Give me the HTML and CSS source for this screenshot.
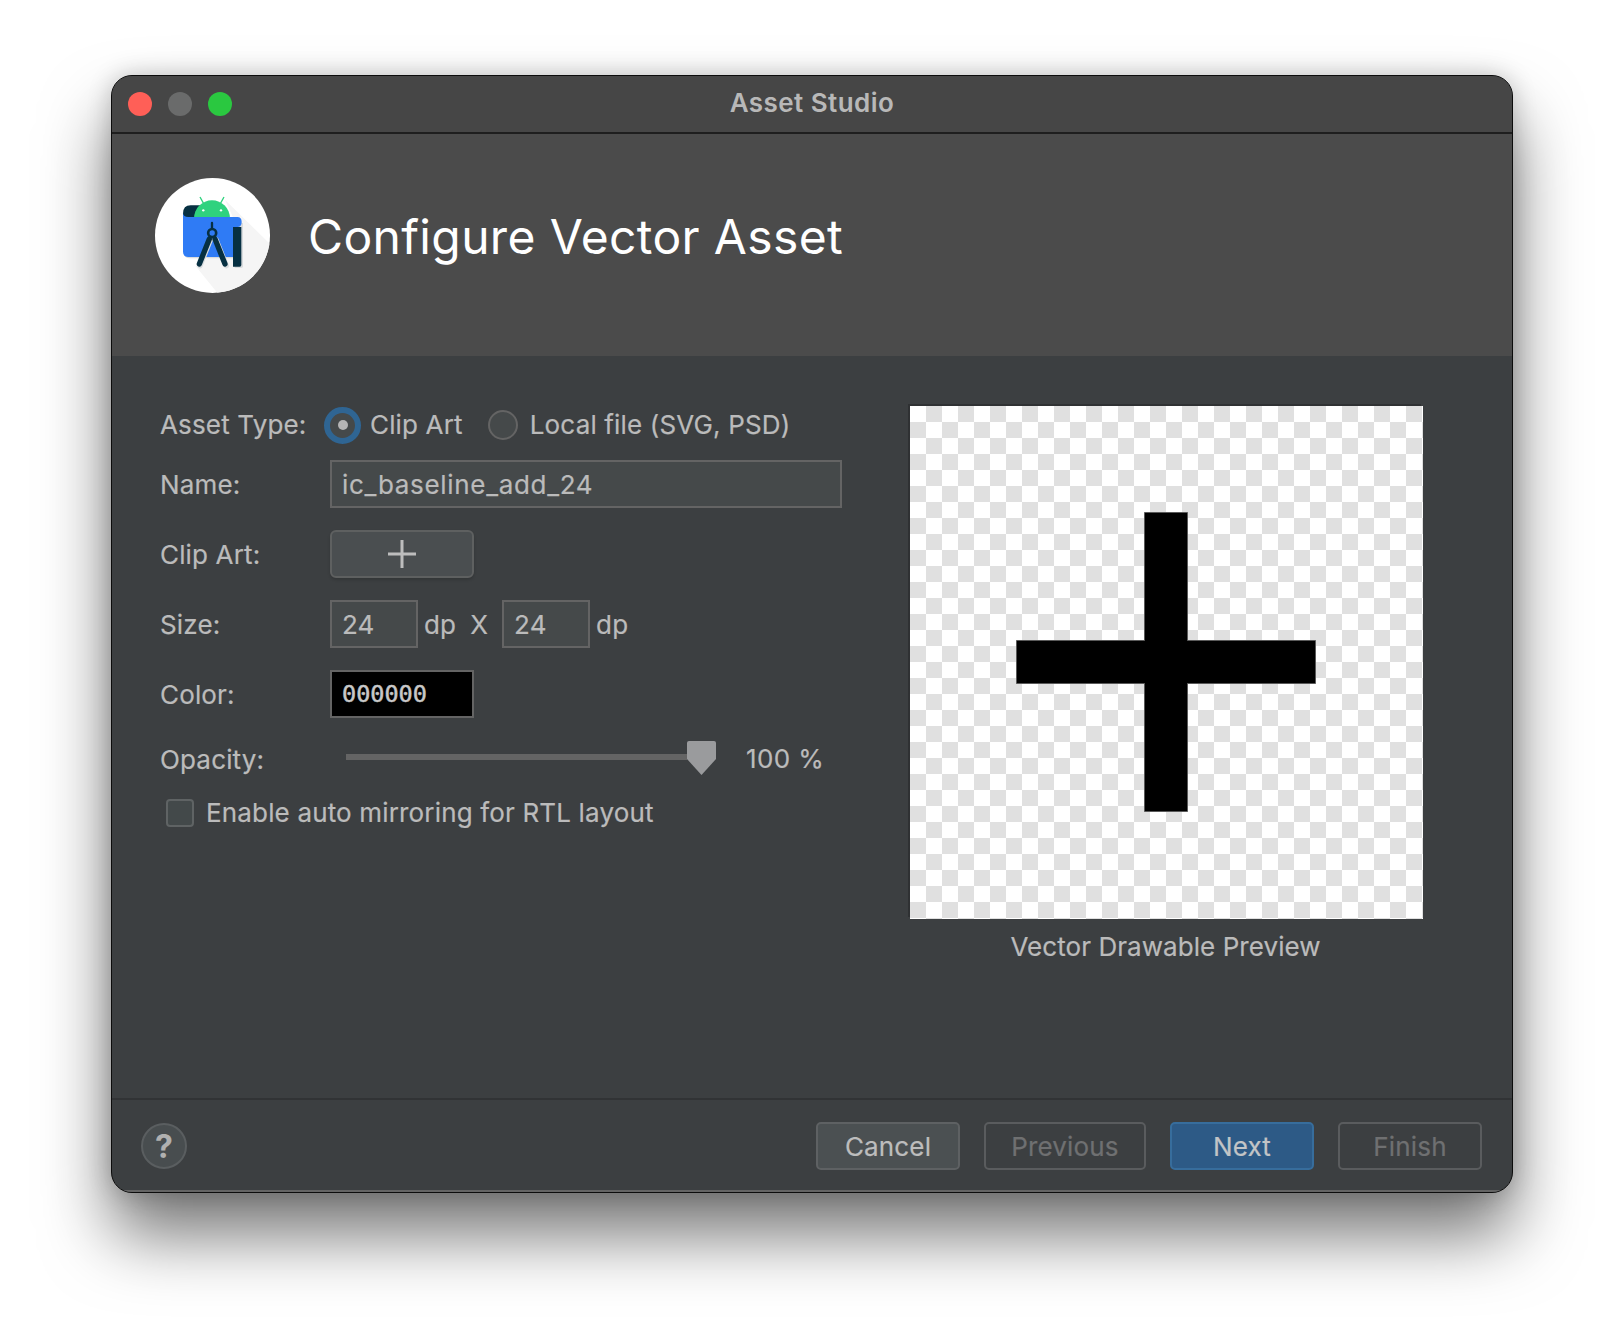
FILE: index.html
```html
<!DOCTYPE html>
<html lang="en">
<head>
<meta charset="utf-8">
<title>Asset Studio</title>
<link rel="stylesheet" href="styles.css">
</head>
<body>
<div class="window">
  <div class="titlebar">
    <div class="lights"><span class="light red"></span><span class="light gray"></span><span class="light green"></span></div>
    <div class="wintitle">Asset Studio</div>
  </div>
  <div class="banner">
    <svg class="logo" viewBox="28 25 345 345" aria-hidden="true">
      <defs><clipPath id="disc"><circle cx="200.5" cy="197.5" r="172.5"/></clipPath></defs>
      <circle cx="200.5" cy="197.5" r="172.5" fill="#fff"/>
      <path clip-path="url(#disc)" d="M238 90L400 250V400H240L150 290L288 200Z" fill="#f5f5f5"/>
      <path d="M112 132Q112 107 135 107H165V150H112Z" fill="#073042"/>
      <path d="M145 146A54 54 0 0 1 253 146Z" fill="#2fd27e"/>
      <path d="M163 82L174 102M235 82L224 102" stroke="#2fd27e" stroke-width="4" fill="none"/>
      <circle cx="173" cy="122" r="3.5" fill="#fff"/><circle cx="226" cy="122" r="3.5" fill="#fff"/>
      <path d="M116 150V250Q116 266 132 266H292V160Z" fill="#d9dcde"/>
      <path d="M112 130Q113 142 128 142H275Q288 142 288 157Q288 172 275 172H262V262H128Q112 262 112 246Z" fill="#2f7bf5"/>
      <path d="M263 176H292V290Q292 295 287 295H267Z" fill="#d9dcde"/>
      <path d="M262 172H287V286Q287 291 282 291H262Z" fill="#073042"/>
      <path d="M199 160V176" stroke="#073042" stroke-width="7" stroke-linecap="round"/>
      <path d="M163 288L194 210M242 288L211 210" stroke="#d9dcde" stroke-width="16" stroke-linecap="round"/>
      <path d="M191 208L161 283M208 208L238 283" stroke="#073042" stroke-width="16" stroke-linecap="round"/>
      <circle cx="199.500" cy="190" r="12" fill="#2f7bf5" stroke="#073042" stroke-width="8"/>
    </svg>
    <h1 class="heading">Configure Vector Asset</h1>
  </div>
  <div class="main">
    <div class="form">
      <div class="row row-radio">
        <span class="label">Asset Type:</span>
        <span class="radio radio-on"><span class="radio-dot"></span></span>
        <span class="opt">Clip Art</span>
        <span class="radio radio-off"></span>
        <span class="opt">Local file (SVG, PSD)</span>
      </div>
      <div class="row row-gap-first">
        <span class="label">Name:</span>
        <div class="field field-name">ic_baseline_add_24</div>
      </div>
      <div class="row row-gap">
        <span class="label">Clip Art:</span>
        <div class="icon-btn"><svg class="plus-small" viewBox="0 0 28 28" aria-hidden="true"><path d="M12.500 0h3v12.500H28v3H15.500V28h-3V15.500H0v-3h12.500z" fill="#bdbdbd"/></svg></div>
      </div>
      <div class="row row-gap">
        <span class="label">Size:</span>
        <div class="field field-size">24</div>
        <span class="unit">dp</span>
        <span class="times">X</span>
        <div class="field field-size">24</div>
        <span class="unit">dp</span>
      </div>
      <div class="row row-gap">
        <span class="label">Color:</span>
        <div class="field field-color">000000</div>
      </div>
      <div class="row row-slider">
        <span class="label">Opacity:</span>
        <div class="track"></div>
        <svg class="thumb" viewBox="0 0 29 34" aria-hidden="true"><path d="M2 0H27Q29 0 29 2V18L14.500 34L0 18V2Q0 0 2 0Z" fill="#9a9b9d"/></svg>
        <span class="percent">100 %</span>
      </div>
      <div class="row row-check">
        <span class="checkbox"></span>
        <span class="check-label">Enable auto mirroring for RTL layout</span>
      </div>
    </div>
    <div class="preview-col">
      <div class="preview">
        <svg class="big-plus" viewBox="0 0 300 300" aria-hidden="true"><path d="M128.500 .5h43v128h128v43h-128v128h-43v-128H.5v-43h128z" fill="#000" stroke="#5a5a5a" stroke-width="1"/></svg>
      </div>
      <div class="caption">Vector Drawable Preview</div>
    </div>
  </div>
  <div class="footer">
    <div class="help">?</div>
    <div class="actions">
      <div class="btn btn-normal btn-cancel">Cancel</div>
      <div class="btn btn-disabled btn-prev">Previous</div>
      <div class="btn btn-primary btn-next">Next</div>
      <div class="btn btn-disabled btn-finish">Finish</div>
    </div>
  </div>
</div>
</body>
</html>
```
FILE: styles.css
```css
* { box-sizing: border-box; }
html, body { margin: 0; padding: 0; background: #fff; }
body { padding: 75px 111px 0; font-family: Inter, "Liberation Sans", sans-serif; color: #bbb; height: 1340px; overflow: hidden; }
.window {
  width: 1402px; height: 1118px; border: 1px solid #0c0c0c; border-radius: 21px; overflow: hidden;
  display: flex; flex-direction: column; background: #3c3f41;
  box-shadow: 0 42px 68px rgba(0,0,0,.54), 0 0 24px rgba(0,0,0,.2);
}
.titlebar { height: 58px; background: #464646; border-bottom: 2px solid #1e1e1e; display: flex; align-items: center; position: relative; flex: none; }
.lights { display: flex; gap: 16px; padding-left: 16px; }
.light { width: 24px; height: 24px; border-radius: 50%; }
.red { background: #ff5f57; }
.gray { background: #6a6b6b; }
.green { background: #2ac840; }
.wintitle { position: absolute; left: 0; right: 0; top: 12px; text-align: center; font-size: 26px; line-height: 30px; font-weight: 600; color: #b8b8b8; letter-spacing: .45px; }
.banner { height: 222px; background: #4b4b4b; display: flex; align-items: flex-start; flex: none; padding: 44px 0 0 43px; }
.logo { width: 115px; height: 115px; flex: none; }
.heading { margin: 0 0 0 38px; padding-top: 1px; font-size: 48px; line-height: 115px; font-weight: 400; color: #fff; letter-spacing: .35px; }
.main { flex: 1; display: flex; padding: 50px 0 0 48px; }
.form { width: 750px; flex: none; }
.row { display: flex; align-items: center; font-size: 26px; letter-spacing: .16px; -webkit-text-stroke: .2px currentColor; }
.label { width: 170px; flex: none; }
.row-radio .label, .row-radio .opt, .check-label { padding-bottom: 2px; }
.row-slider .label { padding-top: 2px; }
.row-radio { height: 38px; }
.row-gap-first { margin-top: 16px; }
.row-gap { margin-top: 22px; }
.row-slider { margin-top: 20px; height: 40px; position: relative; }
.row-check { margin-top: 19px; height: 32px; padding-left: 6px; }
.radio { border-radius: 50%; flex: none; display: flex; align-items: center; justify-content: center; }
.radio-on { width: 37px; height: 37px; margin-left: -6px; background: #45494a; border: 6px solid #2f6593; }
.radio-dot { width: 10px; height: 10px; border-radius: 50%; background: #b5b5b5; }
.radio-off { width: 30px; height: 30px; margin-left: 25px; background: #45494a; border: 2px solid #646464; }
.opt { margin-left: 9px; }
.radio-off + .opt { margin-left: 12px; }
.field { height: 48px; border: 2px solid #646464; background: #45494a; padding: 0 0 0 10px; display: flex; align-items: center; }
.field-name { width: 512px; letter-spacing: .68px; }
.field-size { width: 88px; }
.unit { margin-left: 6px; }
.times { margin: 0 14px; }
.field-color { width: 144px; background: #000; font-family: "DejaVu Sans Mono", monospace; font-size: 23.500px; letter-spacing: 0; color: #c8c8c8; -webkit-text-stroke: .5px #c8c8c8; }
.icon-btn { width: 144px; height: 48px; border: 2px solid #5e6060; border-radius: 6px; background: #4a4e50; display: flex; align-items: center; justify-content: center; box-shadow: 0 2px 3px rgba(0,0,0,.15); }
.plus-small { width: 28px; height: 28px; }
.track { position: absolute; left: 186px; width: 341px; top: 16px; height: 6px; background: #646464; }
.thumb { position: absolute; left: 527px; top: 3px; width: 29px; height: 34px; }
.percent { position: absolute; left: 586px; top: 5px; line-height: 32px; letter-spacing: .4px; }
.checkbox { width: 28px; height: 28px; flex: none; border: 2px solid #5f6364; border-radius: 4px; background: #43494a; }
.check-label { margin-left: 12px; }
.preview-col { width: 513px; flex: none; }
.preview {
  width: 513px; height: 513px; display: flex; align-items: center; justify-content: center; padding: 0 2px 2px 0;
  background-color: #fff;
  background-image: conic-gradient(#e0e0e0 25%, #fff 0 50%, #e0e0e0 0 75%, #fff 0);
  background-size: 32px 32px;
  box-shadow: -2px -2px 0 #2f3133;
}
.big-plus { width: 300px; height: 300px; }
.caption { text-align: center; font-size: 26px; letter-spacing: .06px; line-height: 32px; margin-top: 12px; padding-right: 2px; -webkit-text-stroke: .2px currentColor; }
.footer { height: 94px; flex: none; border-top: 2px solid #313335; border-bottom: 2px solid #646464; display: flex; align-items: center; justify-content: space-between; padding: 2px 30px 0 29px; }
.help { width: 46px; height: 46px; border-radius: 50%; background: #484d4f; border: 2px solid #5a5e60; display: flex; align-items: center; justify-content: center; font-size: 32px; font-weight: 700; color: #b0b0b0; }
.actions { display: flex; gap: 24px; }
.btn { height: 48px; border-radius: 5px; border: 2px solid; display: flex; align-items: center; justify-content: center; font-size: 26px; letter-spacing: .16px; -webkit-text-stroke: .2px currentColor; }
.btn-cancel { width: 144px; }
.btn-prev { width: 162px; }
.btn-next { width: 144px; }
.btn-finish { width: 144px; }
.btn-normal { background: #4b5052; border-color: #5e6163; color: #bdbdbd; }
.btn-disabled { background: transparent; border-color: #5a5c5e; color: #6f7071; }
.btn-primary { background: #2d5a86; border-color: #376d9c; color: #c2c4c6; }
```
